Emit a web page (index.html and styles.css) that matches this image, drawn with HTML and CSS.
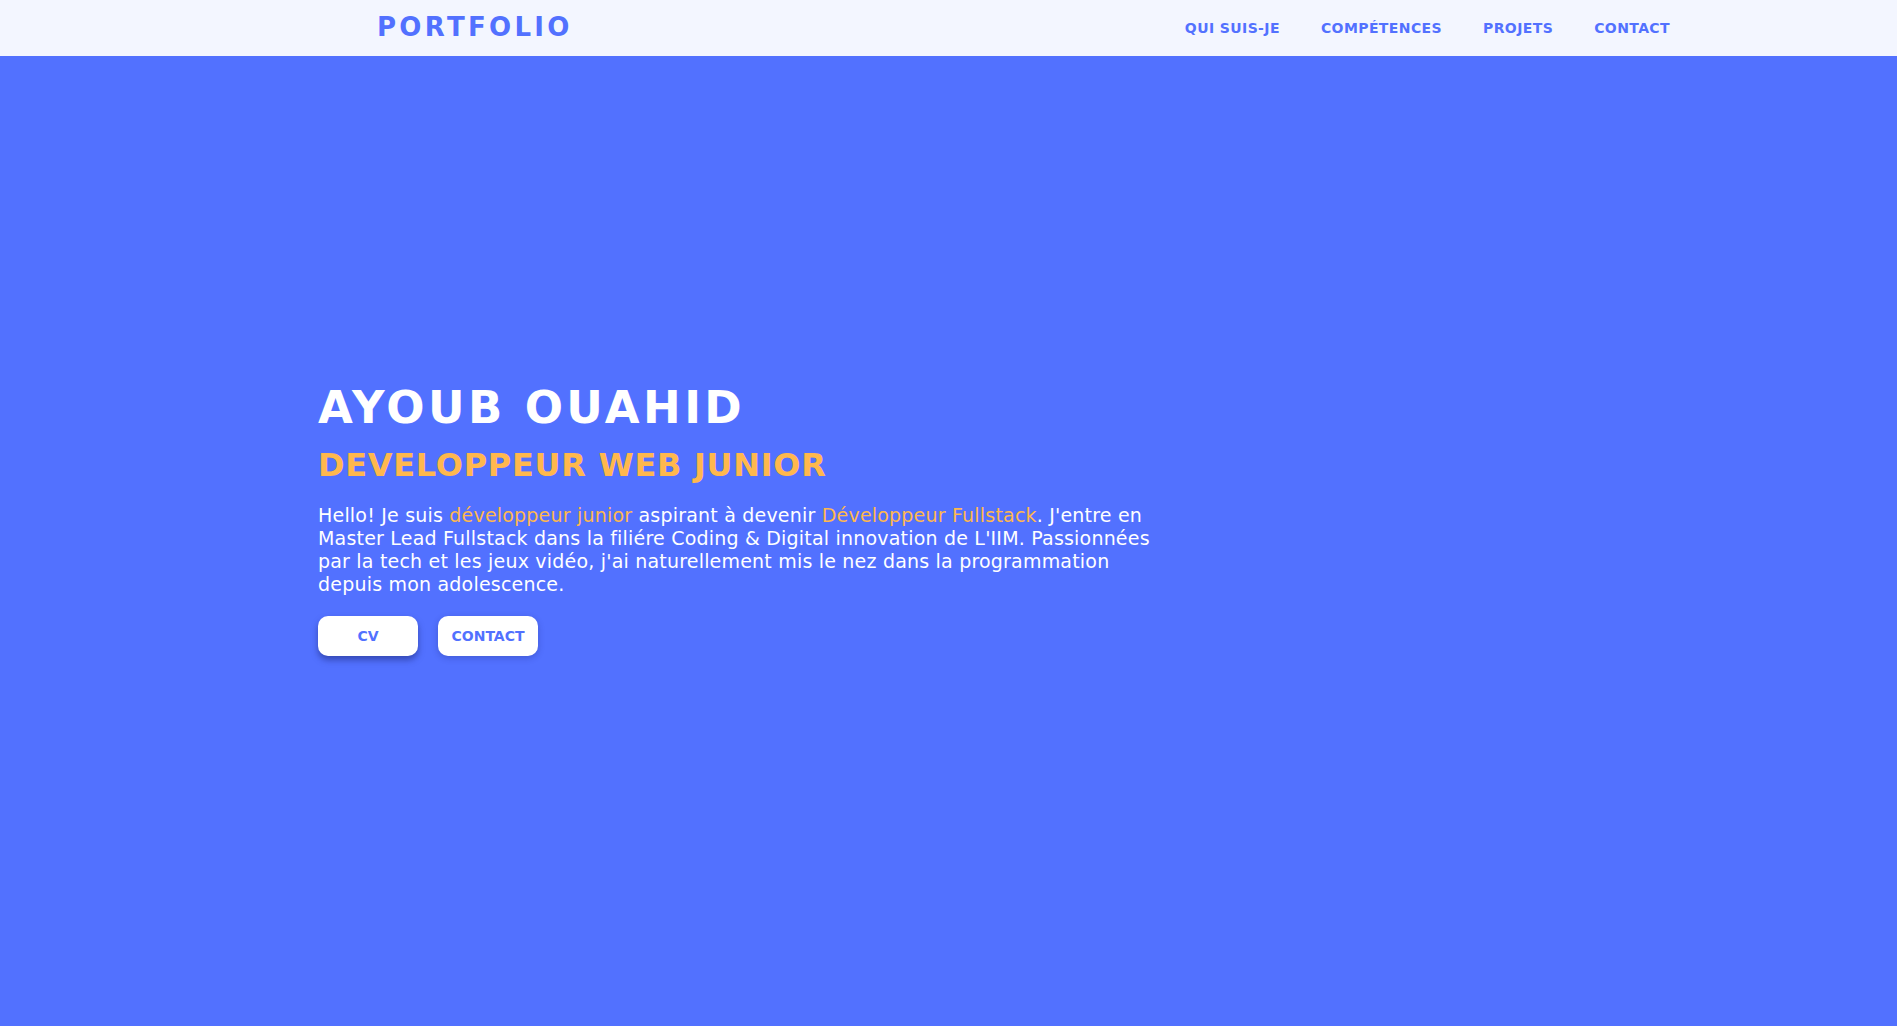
FILE: index.html
```html
<!DOCTYPE html>
<html lang="fr">
<head>
<meta charset="utf-8">
<title>Portfolio</title>
<link rel="stylesheet" href="styles.css">
</head>
<body>
<header class="topbar">
  <a class="logo" href="#">PORTFOLIO</a>
  <nav class="nav">
    <a href="#">QUI SUIS-JE</a>
    <a href="#">COMPÉTENCES</a>
    <a href="#">PROJETS</a>
    <a href="#">CONTACT</a>
  </nav>
</header>
<main class="hero">
  <div class="hero-content">
    <h1 class="name">AYOUB OUAHID</h1>
    <h2 class="role">DEVELOPPEUR WEB JUNIOR</h2>
    <p class="intro">Hello! Je suis <span class="hl">développeur junior</span> aspirant à devenir <span class="hl">Développeur Fullstack</span>. J'entre en Master Lead Fullstack dans la filiére Coding &amp; Digital innovation de L'IIM. Passionnées par la tech et les jeux vidéo, j'ai naturellement mis le nez dans la programmation depuis mon adolescence.</p>
    <div class="actions">
      <a class="btn btn-active" href="#">CV</a>
      <a class="btn" href="#">CONTACT</a>
    </div>
  </div>
</main>
</body>
</html>
```

FILE: styles.css
```css
* { box-sizing: border-box; }
html, body { margin: 0; padding: 0; }
body {
  font-family: "DejaVu Sans", Verdana, sans-serif;
  background: #5271ff;
  color: #fff;
  height: 1026px;
  overflow: hidden;
}
a { text-decoration: none; }

.topbar {
  height: 56px;
  background: #f3f6ff;
  display: flex;
  align-items: center;
  justify-content: space-between;
  padding: 0 227px 0 377px;
}
.logo {
  font-size: 26px;
  font-weight: bold;
  letter-spacing: 3.3px;
  color: #5271ff;
  margin-bottom: 2px;
}
.nav {
  display: flex;
  gap: 41px;
}
.nav a {
  font-size: 14px;
  font-weight: bold;
  letter-spacing: 0.4px;
  color: #5271ff;
}

.hero {
  padding: 326px 0 0 318px;
}
.name {
  margin: 0;
  font-size: 45px;
  font-weight: bold;
  letter-spacing: 3.4px;
  line-height: 52px;
}
.role {
  margin: 13px 0 0;
  font-size: 32px;
  font-weight: bold;
  letter-spacing: 0.7px;
  line-height: 37px;
  color: #ffb84d;
}
.intro {
  margin: 20px 0 0;
  max-width: 845px;
  font-size: 19px;
  letter-spacing: 0.2px;
  line-height: 23px;
}
.hl { color: #ffb84d; }

.actions {
  display: flex;
  gap: 20px;
  margin-top: 20px;
}
.btn {
  width: 100px;
  height: 40px;
  border-radius: 10px;
  background: #fff;
  color: #5271ff;
  font-size: 14px;
  font-weight: bold;
  display: flex;
  align-items: center;
  justify-content: center;
  box-shadow: 0 2px 6px rgba(30, 40, 120, 0.3);
}
.btn-active {
  box-shadow: 0 4px 6px rgba(30, 40, 120, 0.55);
}
```
